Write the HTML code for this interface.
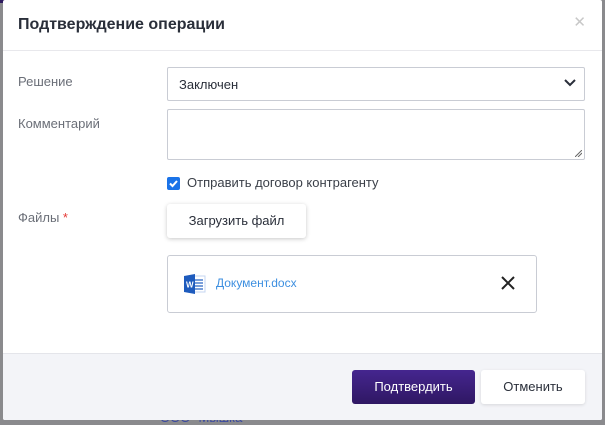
<!DOCTYPE html>
<html><head><meta charset="utf-8"><style>
*{box-sizing:border-box;margin:0;padding:0}
body{width:605px;height:425px;background:#8a8a8d;font-family:"Liberation Sans",sans-serif;position:relative;overflow:hidden}
.bg{position:absolute;left:160px;top:410px;color:#3b4aa0;font-size:13px}
.topbar{position:absolute;left:0;top:0;width:195px;height:3px;background:#2e1a5e}
.modal{position:absolute;left:3px;top:0;width:599px;height:420px;background:#fff;border-radius:2px;overflow:hidden}
.title{position:absolute;left:15px;top:16px;font-size:16px;font-weight:bold;color:#2a2f3a}
.close{position:absolute;right:16px;top:13px;color:#c8c8c8;font-size:15px}
.hr{position:absolute;left:0;top:50px;width:100%;height:1px;background:#e8e8ec}
.lbl{position:absolute;left:15px;font-size:13px;color:#6b6f78}
.select{position:absolute;left:164px;top:67px;width:418px;height:34px;border:1px solid #c9ccd4;border-radius:2px;font-size:13px;color:#2a2f3a;padding:9px 11px}
.ta{position:absolute;left:164px;top:109px;width:418px;height:51px;border:1px solid #c9ccd4;border-radius:2px}
.chk{position:absolute;left:164px;top:177px;width:13px;height:13px;background:#1a73e8;border-radius:2px}
.chkt{position:absolute;left:184px;top:175px;font-size:13px;color:#3a3f48}
.up{position:absolute;left:164px;top:204px;width:139px;height:34px;background:#fff;border-radius:3px;box-shadow:0 1px 4px rgba(0,0,0,.22);font-size:13px;color:#2a2f3a;text-align:center;line-height:34px}
.file{position:absolute;left:164px;top:255px;width:370px;height:58px;border:1px solid #c9ccd4;border-radius:3px}
.fn{position:absolute;left:48px;top:20px;font-size:12px;color:#3d8fe0}
.foot{position:absolute;left:0;top:353px;width:100%;height:67px;background:#f3f4f8;border-top:1px solid #e4e5ea}
.b1{position:absolute;left:349px;top:370px;width:123px;height:34px;border-radius:3px;background:linear-gradient(#45268f,#2f1763);color:#fff;font-size:13px;text-align:center;line-height:34px}
.b2{position:absolute;left:478px;top:370px;width:104px;height:34px;border-radius:3px;background:#fff;color:#2a2f3a;font-size:13px;text-align:center;line-height:34px;box-shadow:0 1px 3px rgba(0,0,0,.12)}
</style></head><body>
<div class="topbar"></div>
<div class="bg">ООО "Мышка"</div>
<div class="modal">
<div class="title">Подтверждение операции</div>
<div class="close">✕</div>
<div class="hr"></div>
<div class="lbl" style="top:74px">Решение</div>
<div class="select">Заключен
<svg style="position:absolute;right:8px;top:11px" width="12" height="8" viewBox="0 0 12 8"><path d="M1 1l5 5 5-5" stroke="#2a2f3a" stroke-width="2" fill="none"/></svg></div>
<div class="lbl" style="top:116px">Комментарий</div>
<div class="ta"><svg style="position:absolute;right:2px;bottom:2px" width="7" height="7"><path d="M0 7L7 0M3 7L7 3" stroke="#666" stroke-width="1"/></svg></div>
<div class="chk"><svg width="13" height="13" viewBox="0 0 13 13"><path d="M3 6.5l2.5 2.5 4.5-5" stroke="#fff" stroke-width="2" fill="none"/></svg></div>
<div class="chkt">Отправить договор контрагенту</div>
<div class="lbl" style="top:210px">Файлы <span style="color:#e53935">*</span></div>
<div class="up">Загрузить файл</div>
<div class="file">
<svg style="position:absolute;left:16px;top:17px" width="22" height="22" viewBox="0 0 22 22"><rect x="8" y="3" width="13" height="16" fill="#fff" stroke="#c4d6f0"/><path d="M11 7h8M11 10h8M11 13h8M11 16h8" stroke="#2b66c4" stroke-width="1.3"/><path d="M0 3l11-2v20L0 19z" fill="#1e5bbd"/><text x="2" y="14.5" font-size="8" font-weight="bold" fill="#fff" font-family="Liberation Sans">W</text></svg>
<div class="fn">Документ.docx</div>
<svg style="position:absolute;left:333px;top:20px" width="14" height="14"><path d="M1 1l12 12M13 1L1 13" stroke="#222" stroke-width="2"/></svg>
</div>
<div class="foot"></div>
<div class="b1">Подтвердить</div>
<div class="b2">Отменить</div>
</div>
</body></html>
